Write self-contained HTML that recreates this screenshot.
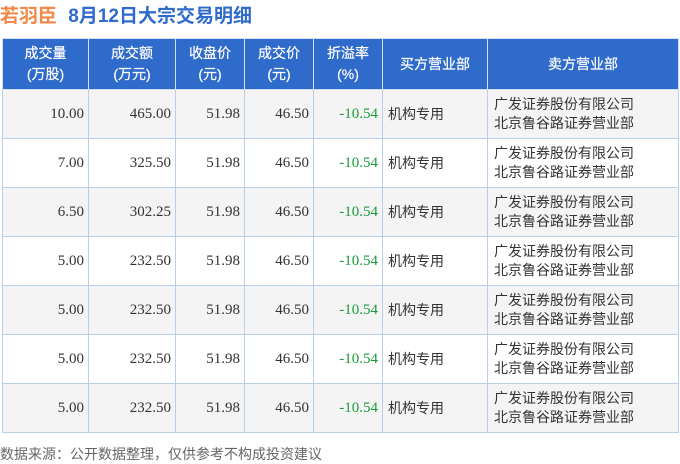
<!DOCTYPE html>
<html><head><meta charset="utf-8"><style>
*{margin:0;padding:0;box-sizing:border-box}
body{width:680px;height:463px;background:#fff;font-family:"Liberation Sans","Noto Sans CJK SC",sans-serif;position:relative;overflow:hidden}
.t{position:absolute;top:1px;left:0px;font-size:19px;font-weight:bold;white-space:nowrap}
table{position:absolute;left:2px;top:38px;border-collapse:collapse;width:677px}
td,th{border:1px solid #b7d0ea;font-size:14px;color:#333}
th{background:#2f6bcb;color:#fff;font-weight:normal;height:51px;line-height:21px;border-color:#d0dff2;font-size:14px;-webkit-text-stroke:0.2px #fff}
td{height:49px;text-align:right;padding-right:4px;font-family:"Liberation Serif","Noto Sans CJK SC",serif;font-size:15px}
td.c{text-align:left;padding-left:5px;font-family:"Liberation Sans","Noto Sans CJK SC",sans-serif;font-size:14px}
td.s{text-align:left;padding-left:6px;font-family:"Liberation Sans","Noto Sans CJK SC",sans-serif;font-size:14px;line-height:19px}
td.g{color:#1a9a3a}
tr.a td{background:#f4f4f4}
.f{position:absolute;left:0px;top:444px;font-size:14px;color:#666}
</style></head><body>
<div class="t"><span style="color:#f08a4b">若羽臣</span> <span style="color:#2f6bcb;margin-left:6px">8月12日大宗交易明细</span></div>
<table>
<tr><th style="width:86px">成交量<br>(万股)</th><th style="width:87px">成交额<br>(万元)</th><th style="width:69px">收盘价<br>(元)</th><th style="width:69px">成交价<br>(元)</th><th style="width:69px">折溢率<br>(%)</th><th style="width:105px">买方营业部</th><th>卖方营业部</th></tr>
<tr class="a"><td>10.00</td><td>465.00</td><td>51.98</td><td>46.50</td><td class="g">-10.54</td><td class="c">机构专用</td><td class="s">广发证券股份有限公司<br>北京鲁谷路证券营业部</td></tr>
<tr><td>7.00</td><td>325.50</td><td>51.98</td><td>46.50</td><td class="g">-10.54</td><td class="c">机构专用</td><td class="s">广发证券股份有限公司<br>北京鲁谷路证券营业部</td></tr>
<tr class="a"><td>6.50</td><td>302.25</td><td>51.98</td><td>46.50</td><td class="g">-10.54</td><td class="c">机构专用</td><td class="s">广发证券股份有限公司<br>北京鲁谷路证券营业部</td></tr>
<tr><td>5.00</td><td>232.50</td><td>51.98</td><td>46.50</td><td class="g">-10.54</td><td class="c">机构专用</td><td class="s">广发证券股份有限公司<br>北京鲁谷路证券营业部</td></tr>
<tr class="a"><td>5.00</td><td>232.50</td><td>51.98</td><td>46.50</td><td class="g">-10.54</td><td class="c">机构专用</td><td class="s">广发证券股份有限公司<br>北京鲁谷路证券营业部</td></tr>
<tr><td>5.00</td><td>232.50</td><td>51.98</td><td>46.50</td><td class="g">-10.54</td><td class="c">机构专用</td><td class="s">广发证券股份有限公司<br>北京鲁谷路证券营业部</td></tr>
<tr class="a"><td>5.00</td><td>232.50</td><td>51.98</td><td>46.50</td><td class="g">-10.54</td><td class="c">机构专用</td><td class="s">广发证券股份有限公司<br>北京鲁谷路证券营业部</td></tr>
</table>
<div class="f">数据来源：公开数据整理，仅供参考不构成投资建议</div>
</body></html>
